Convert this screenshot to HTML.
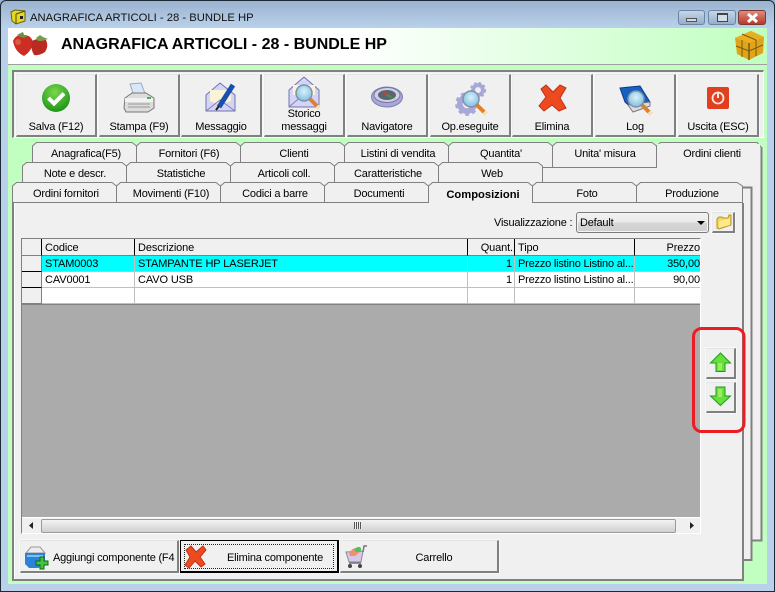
<!DOCTYPE html>
<html><head><meta charset="utf-8"><style>
html,body{margin:0;padding:0}
body{width:775px;height:592px;overflow:hidden;position:relative;background:#b9d1ea;font-family:"Liberation Sans",sans-serif;font-size:11px;letter-spacing:-.2px;color:#000}
div{position:absolute;box-sizing:border-box}
svg{position:absolute;overflow:visible}
.t{white-space:nowrap;line-height:14px;height:14px;font-size:11px}
.btn{background:#f0f0f0;border:1px solid #fff;border-right:2px solid #808080;border-bottom:2px solid #808080;border-top-color:#e4e4e4;border-left-color:#ececec;box-shadow:0 0 0 1px #f8f8f8}
.l{width:100%;text-align:center;left:0}
.c{height:16px;line-height:17px;white-space:nowrap;overflow:hidden;font-size:11px;letter-spacing:-.12px;padding:0 3px;border-right:1px solid #c0c0c0;border-bottom:1px solid #c0c0c0}
.h{height:17px;line-height:18px;white-space:nowrap;overflow:hidden;font-size:11px;letter-spacing:-.12px;padding:0 3px;background:#f0f0f0;border-right:1px solid #000;border-bottom:1px solid #808080}
text{font-family:"Liberation Sans",sans-serif;font-size:11px;letter-spacing:-.2px;fill:#000}
</style></head><body>
<div style="left:0;top:0;width:775px;height:28px;background:linear-gradient(#9bb2ce,#b9d1ea)"></div>
<div style="left:0;top:0;width:775px;height:592px;border:1px solid #1c2a36;border-radius:6px 6px 0 0;z-index:20"></div>
<svg style="left:10px;top:8px" width="16" height="17" viewBox="0 0 16 17"><path d="M1 4L5 2 15 3V13L6 16 2 13Z" fill="#e6d820" stroke="#6a6410"/><path d="M6 6V16M6 6L15 3" stroke="#4a4a10" fill="none"/><rect x="10" y="8" width="3" height="3" fill="#222"/></svg>
<div class="t" style="left:30px;top:11px;color:#111;font-size:11.25px;letter-spacing:0">ANAGRAFICA ARTICOLI - 28 - BUNDLE HP</div>
<div style="left:678px;top:10px;width:27px;height:15px;border:1px solid #6d84a2;border-radius:3px;background:linear-gradient(#c5d5e8,#93aecc)"><div style="left:7px;top:7px;width:11px;height:4px;background:#d5d8dc;border:1px solid #555"></div></div>
<div style="left:708px;top:10px;width:28px;height:15px;border:1px solid #6d84a2;border-radius:3px;background:linear-gradient(#c5d5e8,#93aecc)"><div style="left:8px;top:2px;width:11px;height:9px;border:1px solid #444;border-top-width:2px;background:#d5dce5"></div></div>
<div style="left:738px;top:10px;width:28px;height:15px;border:1px solid #7a3a30;border-radius:3px;background:linear-gradient(#dd8d80,#b8392a)"><svg style="left:7px;top:2px" width="13" height="10"><path d="M2 1L11 9M11 1L2 9" stroke="#fff" stroke-width="3"/></svg></div>

<div style="left:8px;top:28px;width:759px;height:556px;background:#c0ffc0"></div>
<div style="left:8px;top:28px;width:759px;height:36px;background:linear-gradient(90deg,#fff 0,#fff 45%,#c0ffc0 100%)"></div>
<div style="left:8px;top:64px;width:759px;height:1px;background:#a0a0a0"></div>
<svg style="left:12px;top:32px" width="40" height="26" viewBox="0 0 40 26"><path d="M1 9Q4 2 12 3 19 3 21 10 20 19 12 24 3 20 1 9Z" fill="#cc2e24"/><path d="M20 9Q27 5 34 8 37 14 33 20 27 24 22 23 18 16 20 9Z" fill="#b92a20"/><path d="M5 3L9 1 11 0 12 3 16 4 12 6 8 5Z" fill="#6d8f42"/><path d="M24 6L28 3 31 5 36 7 30 9 26 9Z" fill="#7f9c4e"/><circle cx="6" cy="10" r="3" fill="#e56a50" opacity=".7"/></svg>
<div style="left:61px;top:35px;font-weight:bold;font-size:16px;letter-spacing:0;line-height:19px;white-space:nowrap">ANAGRAFICA ARTICOLI - 28 - BUNDLE HP</div>
<svg style="left:734px;top:30px" width="30" height="31" viewBox="0 0 30 31"><path d="M1 8L17 1 30 7 29 23 15 30 3 24Z" fill="#dfa418"/><path d="M1 8L15 13 30 7 17 1Z" fill="#e8b020"/><path d="M15 13V30" stroke="#7a5a10" stroke-width="1.5"/><path d="M2 16L15 21 29 15M8 4L22 10M8 10V27M22 10V26" stroke="#7a5a10" fill="none"/></svg>

<!-- toolbar -->
<div style="left:12px;top:70px;width:752px;height:68px;background:#f0f0f0;border:1px solid #808080;border-right-color:#fff;border-bottom-color:#fff;border-top-width:2px;border-left-width:2px"></div>
<div class="btn" style="left:16px;top:74px;width:81px;height:63px"><div class="t l" style="top:45px">Salva (F12)</div></div>
<div class="btn" style="left:99px;top:74px;width:81px;height:63px"><div class="t l" style="top:45px">Stampa (F9)</div></div>
<div class="btn" style="left:181px;top:74px;width:81px;height:63px"><div class="t l" style="top:45px">Messaggio</div></div>
<div class="btn" style="left:264px;top:74px;width:81px;height:63px"><div class="t l" style="top:32px">Storico</div><div class="t l" style="top:45px">messaggi</div></div>
<div class="btn" style="left:347px;top:74px;width:81px;height:63px"><div class="t l" style="top:45px">Navigatore</div></div>
<div class="btn" style="left:430px;top:74px;width:81px;height:63px"><div class="t l" style="top:45px">Op.eseguite</div></div>
<div class="btn" style="left:512px;top:74px;width:81px;height:63px"><div class="t l" style="top:45px">Elimina</div></div>
<div class="btn" style="left:595px;top:74px;width:81px;height:63px"><div class="t l" style="top:45px">Log</div></div>
<div class="btn" style="left:678px;top:74px;width:81px;height:63px"><div class="t l" style="top:45px">Uscita (ESC)</div></div>

<svg style="left:0;top:0;z-index:3" width="775" height="592">
<defs>
<radialGradient id="g1" cx=".45" cy=".3" r=".8"><stop offset="0" stop-color="#7bd84e"/><stop offset="1" stop-color="#128a12"/></radialGradient>
<radialGradient id="lens" cx=".5" cy=".4" r=".6"><stop offset="0" stop-color="#d9f1fa"/><stop offset="1" stop-color="#7fbfe0"/></radialGradient>
<g id="mag"><path d="M6 6L15 15" stroke="#e0802a" stroke-width="4"/><path d="M13 13L15 15" stroke="#f5e3c0" stroke-width="4"/><circle cx="0" cy="0" r="8" fill="url(#lens)" stroke="#8090a8" stroke-width="1.5"/></g>
<g id="gear"><circle r="7.500" fill="none" stroke="#a8a8d8" stroke-width="6"/><circle r="11" fill="none" stroke="#a8a8d8" stroke-width="3" stroke-dasharray="4 3.5"/></g>
</defs>
<!-- salva -->
<circle cx="56" cy="98" r="14" fill="url(#g1)"/><path d="M48.500 98L54 103.500 64 93.500" stroke="#fff" stroke-width="4" fill="none"/>
<!-- stampa -->
<path d="M130 84L141 83 146 96H134Z" fill="#d8e8f8" stroke="#9ab"/><path d="M125 98L132 93H146L154 98V108L148 112H126L124 108Z" fill="#dcdcdc" stroke="#777"/><path d="M125 98H153V102H125Z" fill="#f2f2f2"/><path d="M128 104H150M128 107H150" stroke="#999"/><rect x="147" y="97" width="4" height="2" fill="#4caf50"/>
<!-- messaggio -->
<path d="M206 95L220 83 235 95V111H206Z" fill="#d4d4f6" stroke="#7272b0"/><path d="M210 90H231V101L220 105 210 101Z" fill="#fbf3d8"/><path d="M206 111L220 100 235 111" stroke="#8080b8" fill="none"/><path d="M219 107L233 85" stroke="#1a4fb0" stroke-width="5"/><path d="M216 110L219 106" stroke="#222" stroke-width="2"/>
<!-- storico -->
<path d="M289 90L304 77 319 90V107H289Z" fill="#d4d4f6" stroke="#7272b0"/><path d="M293 85H315V95H293Z" fill="#fbf3d8"/><path d="M289 107L304 94 319 107" stroke="#8080b8" fill="none"/>
<use href="#mag" x="304" y="93"/>
<!-- navigatore -->
<ellipse cx="387" cy="97" rx="15.500" ry="10" fill="#a8a8d8" stroke="#8080b0"/><ellipse cx="387" cy="95" rx="13" ry="7.500" fill="#cfd0e8" stroke="#7878a8"/><ellipse cx="387" cy="95" rx="9" ry="5" fill="#5c6470"/><path d="M381 90L389 95 386 96Z" fill="#d83a2a"/><path d="M388 94L395 99 386 96Z" fill="#3a9a48"/>
<!-- op eseguite -->
<g transform="translate(478,90)"><use href="#gear" transform="scale(.65)"/></g><g transform="translate(467,104)"><use href="#gear" transform="scale(.95)"/></g>
<g transform="translate(471,99)"><use href="#mag"/></g>
<!-- elimina -->
<path d="M546 85L553 92 560 85 566 88 560 98 566 108 559 111 552 105 544 111 539 106 546 97 541 89Z" fill="#ee4a20" stroke="#c03015"/>
<!-- log -->
<path d="M620 88L640 86 650 102 634 110 625 102Z" fill="#1860c0" stroke="#0a3a88"/><path d="M628 105L650 102V106L633 112Z" fill="#ddd" stroke="#778"/>
<use href="#mag" x="636" y="99"/>
<!-- uscita -->
<rect x="707" y="87" width="22" height="22" rx="2" fill="#e0401f"/><circle cx="718" cy="98" r="5.500" fill="none" stroke="#f8e8e0" stroke-width="1.800"/><path d="M718 92V98" stroke="#f8e8e0" stroke-width="2"/>
</svg>

<!-- tabs -->
<svg style="left:0;top:0;z-index:2" width="775" height="592">
<rect x="500" y="165" width="261" height="40" fill="#f0f0f0"/>
<g fill="#f0f0f0" stroke="#808080" stroke-width="1">
<path d="M32.500 167V146L36.500 142.500H132L136.500 146V167"/><path d="M136.500 167V146L140.500 142.500H236L240.500 146V167"/><path d="M240.500 167V146L244.500 142.500H340L344.500 146V167"/><path d="M344.500 167V146L348.500 142.500H444L448.500 146V167"/><path d="M448.500 167V146L452.500 142.500H548L552.500 146V167"/>
<path d="M552.500 167.500V146L556.500 142.500H652L656.500 146V167.500Z"/>
</g>
<!-- back panels -->
<path d="M656.500 168V146L660.500 142.500H757L761 147V540H700" fill="#f0f0f0" stroke="#808080" stroke-width="1"/>
<path d="M761.500 147V540.500H700" fill="none" stroke="#808080" stroke-width="2"/>
<rect x="657" y="144" width="103" height="26" fill="#f0f0f0"/>
<rect x="700" y="168" width="60" height="371" fill="#f0f0f0"/>
<rect x="500" y="168" width="258" height="20" fill="#f0f0f0"/>
<path d="M742 187.500H751.500V560H700" fill="#f0f0f0" stroke="#808080" stroke-width="2"/>
<rect x="700" y="189" width="50" height="370" fill="#f0f0f0"/>
<g fill="#f0f0f0" stroke="#808080" stroke-width="1">
<path d="M22.500 187V166L26.500 162.500H122L126.500 166V187"/><path d="M126.500 187V166L130.500 162.500H226L230.500 166V187"/><path d="M230.500 187V166L234.500 162.500H330L334.500 166V187"/><path d="M334.500 187V166L338.500 162.500H434L438.500 166V187"/><path d="M438.500 187V166L442.500 162.500H538L542.500 166V187"/>
</g>
<path d="M543 167.500H656" stroke="#808080"/>
<g fill="#f0f0f0" stroke="#808080" stroke-width="1">
<path d="M12.500 203V186L16.500 182.500H112L116.500 186V203"/><path d="M116.500 203V186L120.500 182.500H216L220.500 186V203"/><path d="M220.500 203V186L224.500 182.500H320L324.500 186V203"/><path d="M324.500 203V186L328.500 182.500H424L428.500 186V203"/><path d="M532.500 203V186L536.500 182.500H632L636.500 186V203"/><path d="M636.500 203V186L640.500 182.500H737L742.500 186V203"/>
</g>
<path d="M12.500 202.500H743" stroke="#808080"/>
<path d="M428.500 203V186L432.500 182.500H528L532.500 186V203" fill="#f0f0f0" stroke="#808080"/>
<path d="M429 202.500H531" stroke="#f0f0f0" stroke-width="2"/>
<text x="86" y="157" text-anchor="middle">Anagrafica(F5)</text><text x="189" y="157" text-anchor="middle">Fornitori (F6)</text><text x="294" y="157" text-anchor="middle">Clienti</text><text x="398" y="157" text-anchor="middle">Listini di vendita</text><text x="501" y="157" text-anchor="middle">Quantita'</text><text x="605" y="157" text-anchor="middle">Unita' misura</text><text x="712" y="157" text-anchor="middle">Ordini clienti</text>
<text x="75" y="177" text-anchor="middle">Note e descr.</text><text x="181" y="177" text-anchor="middle">Statistiche</text><text x="284" y="177" text-anchor="middle">Articoli coll.</text><text x="388" y="177" text-anchor="middle">Caratteristiche</text><text x="492" y="177" text-anchor="middle">Web</text>
<text x="66" y="197" text-anchor="middle">Ordini fornitori</text><text x="171" y="197" text-anchor="middle">Movimenti (F10)</text><text x="275" y="197" text-anchor="middle">Codici a barre</text><text x="379" y="197" text-anchor="middle">Documenti</text><text x="483" y="198" text-anchor="middle" font-weight="bold" style="font-size:11.2px;letter-spacing:0">Composizioni</text><text x="587" y="197" text-anchor="middle">Foto</text><text x="692" y="197" text-anchor="middle">Produzione</text>
</svg>

<!-- main page -->
<div style="left:12px;top:203px;width:732px;height:378px;background:#f0f0f0;border-left:2px solid #808080;border-right:2px solid #808080;border-bottom:2px solid #808080;box-shadow:inset 1px 0 0 #fff;z-index:2"></div>
<div class="t" style="left:494px;top:216px;z-index:4">Visualizzazione :</div>
<div style="left:576px;top:212px;width:133px;height:21px;z-index:4;border:1px solid #7a7a7a;border-radius:3px;background:linear-gradient(#f2f2f2 0,#ebebeb 45%,#d6d6d6 55%,#cfcfcf 100%);line-height:20px;padding-left:3px;box-shadow:inset 0 0 0 1px #f4f4f4">Default<svg style="left:120px;top:8px" width="8" height="5"><path d="M0 0H8L4 4Z" fill="#000"/></svg></div>
<div class="btn" style="left:712px;top:212px;width:23px;height:21px;z-index:4"><svg style="left:3px;top:1px" width="16" height="16"><path d="M1 5L3 3H6L7 4H12L13 1 15 1V11L3 15 1 14Z" fill="#f6d65a" stroke="#b89420"/><path d="M3 7L14 4 14 11 3 14Z" fill="#fbe98c"/></svg></div>

<!-- grid -->
<div style="left:21px;top:238px;width:680px;height:296px;background:#ababab;border:1px solid #808080;border-right:1px solid #fff;border-bottom:1px solid #fff;z-index:4;overflow:hidden">
<div class="h" style="left:0;top:0;width:20px"></div>
<div class="h" style="left:20px;top:0;width:93px">Codice</div>
<div class="h" style="left:113px;top:0;width:333px">Descrizione</div>
<div class="h" style="left:446px;top:0;width:47px;text-align:right;padding:0 1px">Quant.</div>
<div class="h" style="left:493px;top:0;width:120px">Tipo</div>
<div class="h" style="left:613px;top:0;width:65px;text-align:right;padding:0;border-right:0">Prezzo</div>
<div style="left:0;top:17px;width:20px;height:16px;background:#f0f0f0;border-right:1px solid #808080;border-bottom:1px solid #000"></div>
<div style="left:0;top:33px;width:20px;height:16px;background:#f0f0f0;border-right:1px solid #808080;border-bottom:1px solid #000"></div>
<div style="left:0;top:49px;width:20px;height:16px;background:#f0f0f0;border-right:1px solid #808080;border-bottom:1px solid #808080"></div>
<div style="left:20px;top:17px;width:658px;height:16px;background:#00ffff"></div>
<div style="left:20px;top:33px;width:658px;height:32px;background:#fff"></div>
<div class="c" style="left:20px;top:17px;width:93px">STAM0003</div><div class="c" style="left:113px;top:17px;width:333px">STAMPANTE HP LASERJET</div><div class="c" style="left:446px;top:17px;width:47px;text-align:right;padding:0 2px">1</div><div class="c" style="left:493px;top:17px;width:120px;padding:0 1px 0 3px;letter-spacing:-.2px">Prezzo listino Listino al...</div><div class="c" style="left:613px;top:17px;width:65px;text-align:right;padding:0;border-right:0">350,00</div>
<div class="c" style="left:20px;top:33px;width:93px">CAV0001</div><div class="c" style="left:113px;top:33px;width:333px">CAVO USB</div><div class="c" style="left:446px;top:33px;width:47px;text-align:right;padding:0 2px">1</div><div class="c" style="left:493px;top:33px;width:120px;padding:0 1px 0 3px;letter-spacing:-.2px">Prezzo listino Listino al...</div><div class="c" style="left:613px;top:33px;width:65px;text-align:right;padding:0;border-right:0">90,00</div>
<div class="c" style="left:20px;top:49px;width:93px;height:16px"></div><div class="c" style="left:113px;top:49px;width:333px"></div><div class="c" style="left:446px;top:49px;width:47px"></div><div class="c" style="left:493px;top:49px;width:120px"></div><div class="c" style="left:613px;top:49px;width:65px;border-right:0"></div>
<div style="left:0;top:65px;width:678px;height:1px;background:#808080"></div>
<div style="left:0;top:278px;width:678px;height:16px;background:#f0f0f0;border-top:1px solid #fff">
<svg style="left:7px;top:4px" width="6" height="8"><path d="M4 0V7L0 3.500Z" fill="#222"/></svg>
<div style="left:19px;top:1px;width:635px;height:14px;border:1px solid #9a9a9a;border-radius:2px;background:linear-gradient(#f2f2f2,#d0d0d0)"></div>
<div style="left:332px;top:4px;width:8px;height:7px;background:repeating-linear-gradient(90deg,#555 0 1px,#eee 1px 2px)"></div>
<svg style="left:667px;top:4px" width="6" height="8"><path d="M1 0V7L5 3.500Z" fill="#222"/></svg>
</div>
</div>

<!-- arrows -->
<div class="btn" style="left:706px;top:348px;width:30px;height:31px;z-index:5"><svg style="left:3px;top:3px" width="21" height="20"><path d="M10.500 1L20.500 11H15V19.500H6V11H.5Z" fill="#66e03c" stroke="#1f9b1f"/><path d="M8 11V18H12V11Z" fill="#9eea62"/></svg></div>
<div class="btn" style="left:706px;top:382px;width:30px;height:31px;z-index:5"><svg style="left:3px;top:3px" width="21" height="20"><path d="M10.500 19.500L20.500 10H15V1H6V10H.5Z" fill="#66e03c" stroke="#1f9b1f"/><path d="M8 3V11H12V3Z" fill="#9eea62"/></svg></div>
<svg style="left:0;top:0;z-index:6" width="775" height="592"><rect x="693.500" y="328.500" width="50.500" height="103" rx="8" fill="none" stroke="#ed1c24" stroke-width="3"/></svg>

<!-- bottom buttons -->
<div class="btn" style="left:20px;top:540px;width:159px;height:33px;z-index:5;overflow:hidden"><div class="t" style="left:32px;top:10px">Aggiungi componente (F4</div>
<svg style="left:3px;top:3px" width="26" height="26"><path d="M2 9L7 3H16L21 9Z" fill="#ececec" stroke="#999"/><path d="M1 9H21V21L14 24H5L1 20Z" fill="#2c82d8"/><path d="M3 12H19" stroke="#7cc0f0" stroke-width="2"/><path d="M16 13H20V17H24V21H20V25H16V21H12V17H16Z" fill="#44c444" stroke="#0c6a0c"/></svg></div>
<div style="left:180px;top:540px;width:159px;height:33px;background:#f0f0f0;border:1px solid #000;border-right-width:2px;border-bottom-width:2px;z-index:5"><div style="left:3px;top:3px;right:3px;bottom:2px;border:1px dotted #222"></div><div class="t" style="left:46px;top:10px">Elimina componente</div>
<svg style="left:3px;top:4px" width="23" height="23"><path d="M7 1L12 7 19 1 22 5 16 12 21 19 17 22 11 16 5 23 1 20 6 12 2 5Z" fill="#ee4a20" stroke="#c03015"/></svg></div>
<div class="btn" style="left:340px;top:540px;width:159px;height:33px;z-index:5"><div class="t l" style="top:10px;left:15px">Carrello</div>
<svg style="left:4px;top:3px" width="22" height="26"><path d="M1 8L18 7 16 18H4Z" fill="#d8c8e8" stroke="#8a8a9a"/><path d="M4 9Q8 3 13 4L15 8 10 12 5 12Z" fill="#f09070"/><path d="M9 6Q13 1 16 4V8H11Z" fill="#50c060"/><path d="M18 8L19 2H22M4 19H16" stroke="#777" fill="none" stroke-width="1.500"/><circle cx="5" cy="22" r="2" fill="#444"/><circle cx="15" cy="22" r="2" fill="#444"/></svg></div>
</body></html>
